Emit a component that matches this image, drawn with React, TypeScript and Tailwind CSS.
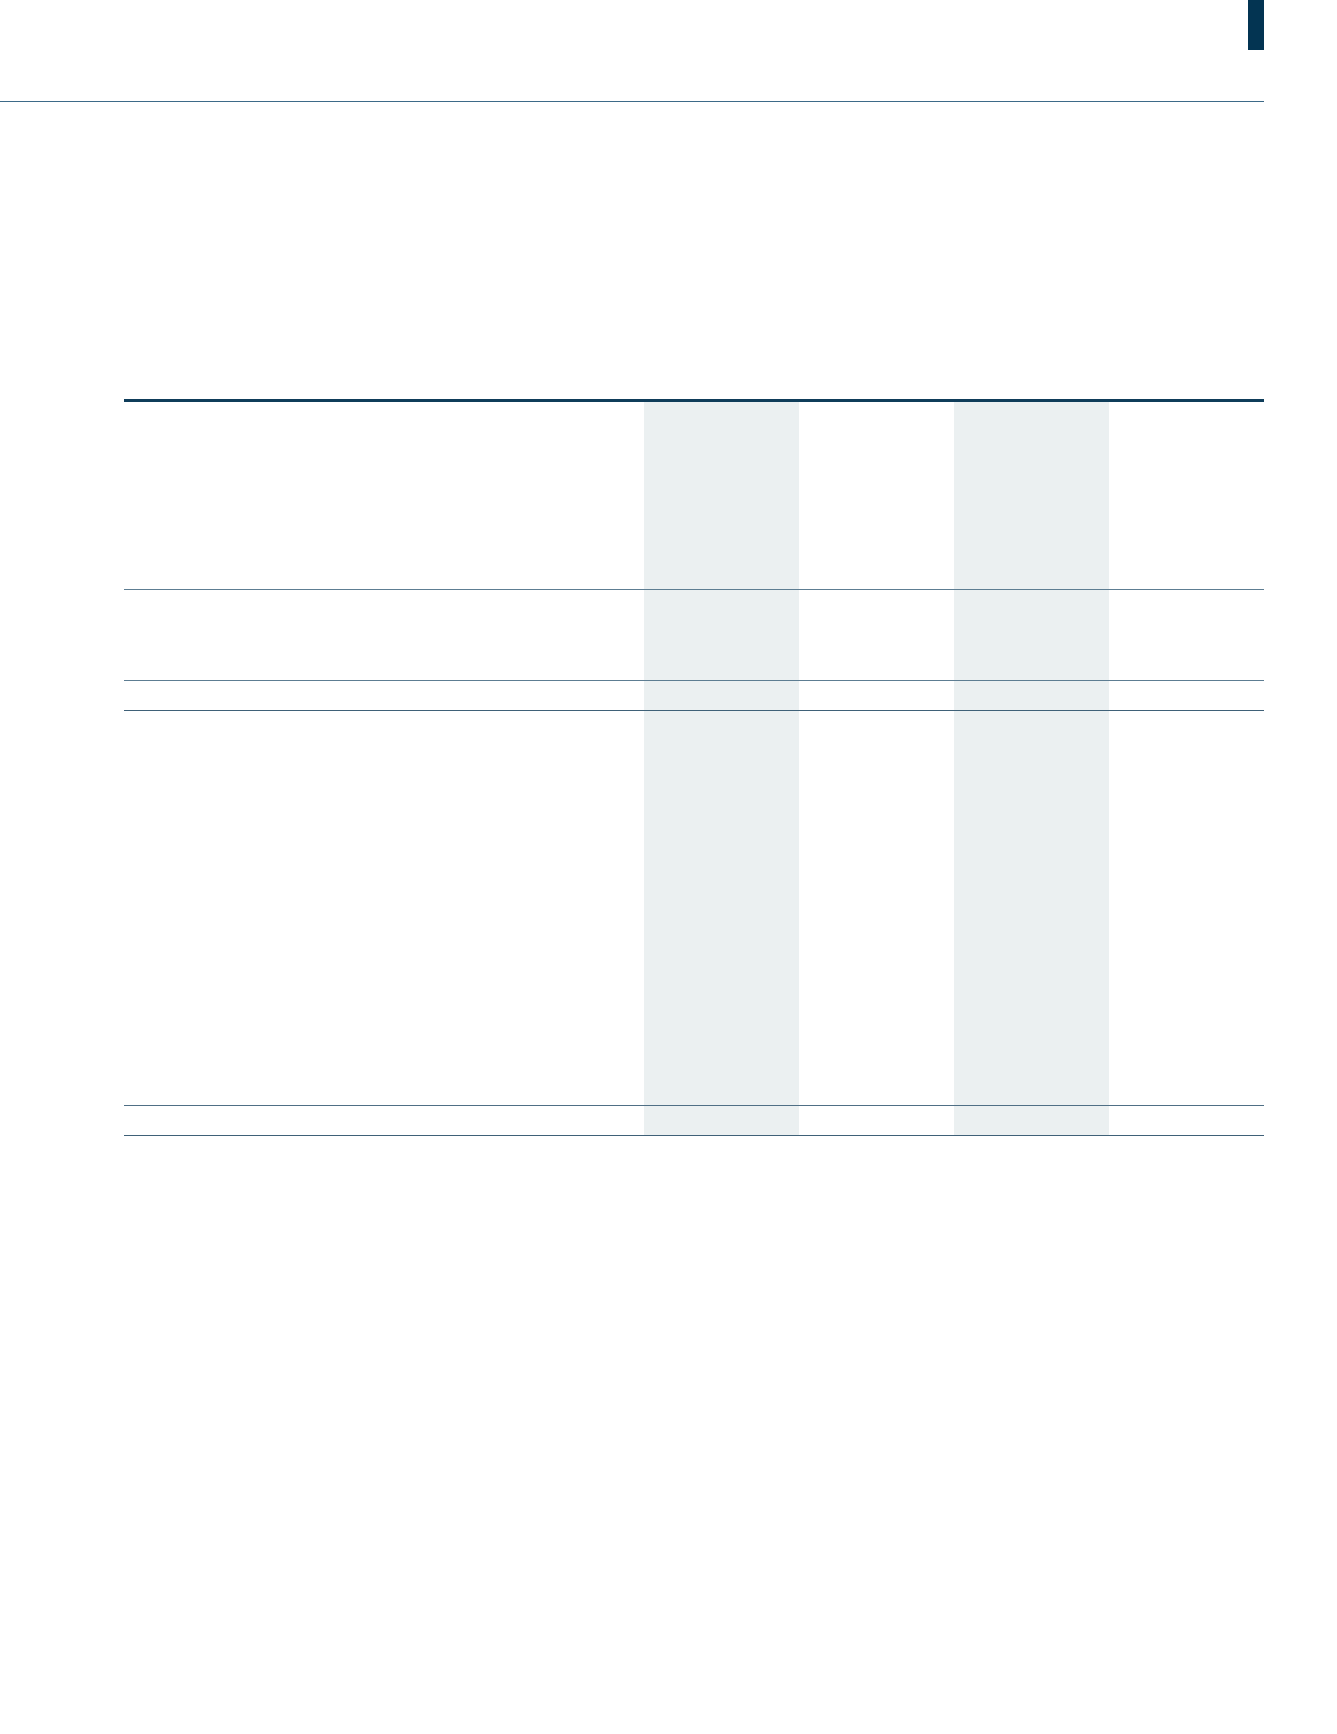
import React from "react";

const rows = [
  { h: "h-[187px]", line: "border-[#5d7d92]" },
  { h: "h-[90px]", line: "border-[#5d7d92]" },
  { h: "h-[29px]", line: "border-[#3f6178]" },
  { h: "h-[394px]", line: "border-[#4f6f85]" },
  { h: "h-[29px]", line: "border-[#3f6178]" },
];

const Row = ({ h, line }: { h: string; line: string }) => (
  <div className={`grid grid-cols-[520px_155px_155px_155px_155px] border-b ${line}`}>
    <div className={h} />
    <div className={`${h} bg-[#ebf0f1]`} />
    <div className={h} />
    <div className={`${h} bg-[#ebf0f1]`} />
    <div className={h} />
  </div>
);

export default function App() {
  return (
    <div className="min-h-[1734px] w-full bg-white font-['Liberation_Sans',sans-serif]">
      <div className="flex w-[1264px] h-[102px] justify-end border-b border-[#3d6a88]">
        <div className="w-[16px] h-[50px] bg-[#033452]" />
      </div>
      <div className="ml-[124px] mt-[297px] w-[1140px] border-t-[3px] border-[#0f3d5a]">
        {rows.map((r, i) => (
          <Row key={i} h={r.h} line={r.line} />
        ))}
      </div>
    </div>
  );
}
